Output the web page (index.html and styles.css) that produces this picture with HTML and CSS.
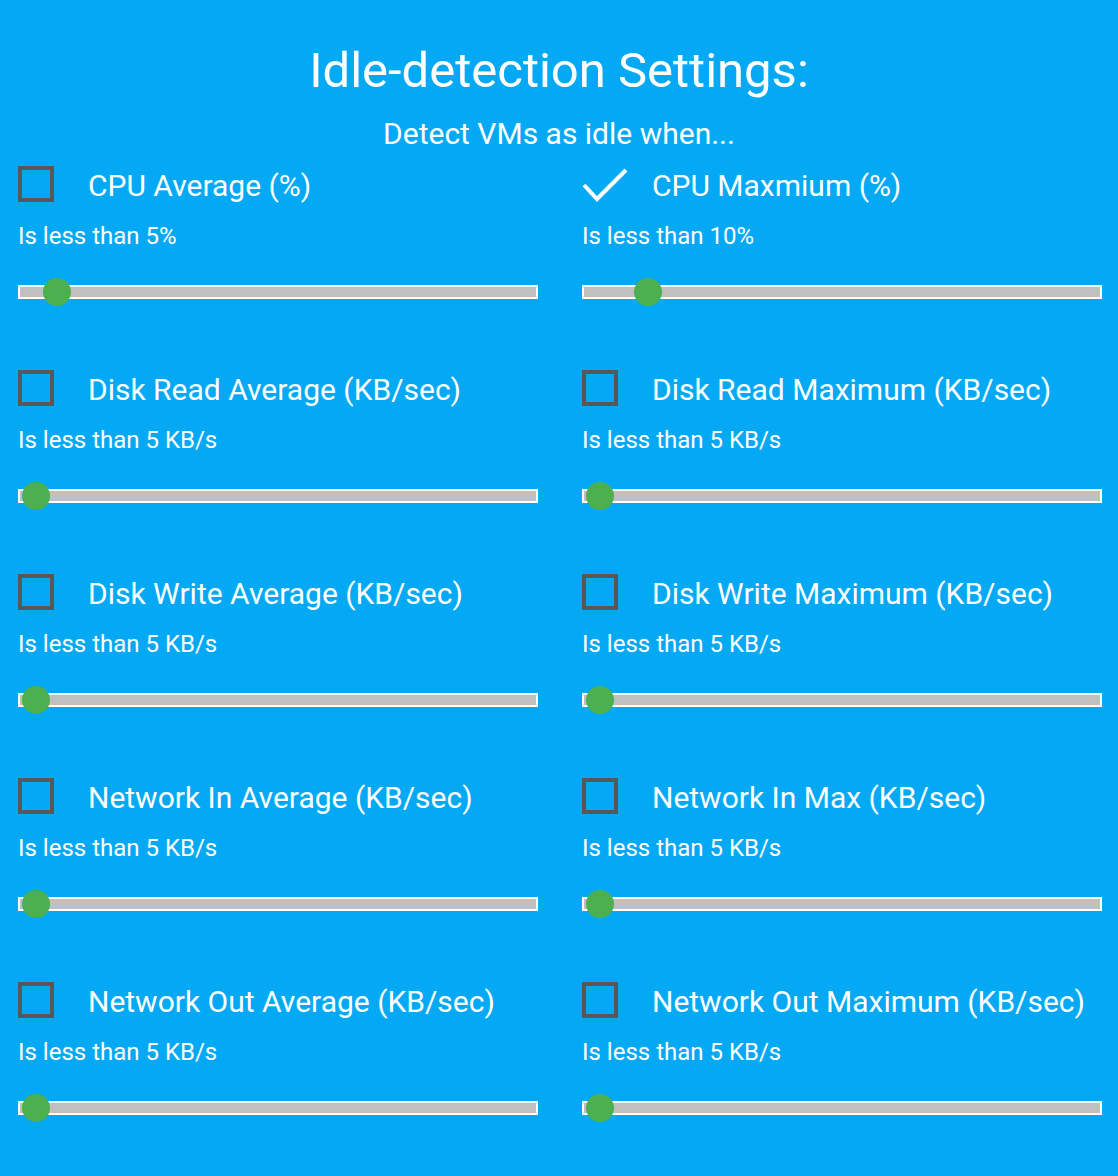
FILE: index.html
```html
<!DOCTYPE html>
<html lang="en">
<head>
    <meta charset="UTF-8">
    <title>Idle-detection Settings</title>
    <link rel="stylesheet" href="styles.css">
</head>
<body>
    <div class="header">
        <h1>Idle-detection Settings:</h1>
        <p>Detect VMs as idle when...</p>
    </div>

    <div class="settings">
        <div class="setting">
            <div class="setting-head">
                <span class="checkbox"></span>
                <span class="label">CPU Average (%)</span>
            </div>
            <div class="value">Is less than 5%</div>
            <div class="slider"><span class="thumb" style="left: 25px"></span></div>
        </div>

        <div class="setting">
            <div class="setting-head">
                <span class="checkbox checked">
                    <svg width="48" height="36" viewBox="0 0 48 36"><polyline points="2,19 15,33 44,4" fill="none" stroke="#fff" stroke-width="4"/></svg>
                </span>
                <span class="label">CPU Maxmium (%)</span>
            </div>
            <div class="value">Is less than 10%</div>
            <div class="slider"><span class="thumb" style="left: 52px"></span></div>
        </div>

        <div class="setting">
            <div class="setting-head">
                <span class="checkbox"></span>
                <span class="label">Disk Read Average (KB/sec)</span>
            </div>
            <div class="value">Is less than 5 KB/s</div>
            <div class="slider"><span class="thumb" style="left: 4px"></span></div>
        </div>

        <div class="setting">
            <div class="setting-head">
                <span class="checkbox"></span>
                <span class="label">Disk Read Maximum (KB/sec)</span>
            </div>
            <div class="value">Is less than 5 KB/s</div>
            <div class="slider"><span class="thumb" style="left: 4px"></span></div>
        </div>

        <div class="setting">
            <div class="setting-head">
                <span class="checkbox"></span>
                <span class="label">Disk Write Average (KB/sec)</span>
            </div>
            <div class="value">Is less than 5 KB/s</div>
            <div class="slider"><span class="thumb" style="left: 4px"></span></div>
        </div>

        <div class="setting">
            <div class="setting-head">
                <span class="checkbox"></span>
                <span class="label">Disk Write Maximum (KB/sec)</span>
            </div>
            <div class="value">Is less than 5 KB/s</div>
            <div class="slider"><span class="thumb" style="left: 4px"></span></div>
        </div>

        <div class="setting">
            <div class="setting-head">
                <span class="checkbox"></span>
                <span class="label">Network In Average (KB/sec)</span>
            </div>
            <div class="value">Is less than 5 KB/s</div>
            <div class="slider"><span class="thumb" style="left: 4px"></span></div>
        </div>

        <div class="setting">
            <div class="setting-head">
                <span class="checkbox"></span>
                <span class="label">Network In Max (KB/sec)</span>
            </div>
            <div class="value">Is less than 5 KB/s</div>
            <div class="slider"><span class="thumb" style="left: 4px"></span></div>
        </div>

        <div class="setting">
            <div class="setting-head">
                <span class="checkbox"></span>
                <span class="label">Network Out Average (KB/sec)</span>
            </div>
            <div class="value">Is less than 5 KB/s</div>
            <div class="slider"><span class="thumb" style="left: 4px"></span></div>
        </div>

        <div class="setting">
            <div class="setting-head">
                <span class="checkbox"></span>
                <span class="label">Network Out Maximum (KB/sec)</span>
            </div>
            <div class="value">Is less than 5 KB/s</div>
            <div class="slider"><span class="thumb" style="left: 4px"></span></div>
        </div>
    </div>
</body>
</html>
```

FILE: styles.css
```css
* {
    margin: 0;
    padding: 0;
    box-sizing: border-box;
}

body {
    font-family: Roboto, "Noto Sans", sans-serif;
    background-color: #03A9F4;
    color: #fff;
    min-height: 1176px;
}

.header {
    text-align: center;
    padding-top: 43px;
}

.header h1 {
    font-size: 49px;
    font-weight: 400;
    line-height: 56px;
}

.header p {
    font-size: 30px;
    line-height: 32px;
    margin-top: 19px;
}

.settings {
    display: grid;
    grid-template-columns: 520px 520px;
    column-gap: 44px;
    row-gap: 64px;
    margin: 16px 0 0 18px;
}

.setting-head {
    display: flex;
    align-items: center;
    height: 36px;
}

.checkbox {
    flex-shrink: 0;
    width: 36px;
    height: 36px;
    border: 4px solid #585858;
    margin-right: 34px;
}

.checkbox.checked {
    border: none;
}

.checkbox svg {
    display: block;
}

.label {
    font-size: 30px;
    line-height: 36px;
    margin-top: 4px;
    white-space: nowrap;
}

.value {
    font-size: 24px;
    line-height: 28px;
    margin-top: 20px;
}

.slider {
    position: relative;
    height: 28px;
    margin-top: 28px;
    display: flex;
    align-items: center;
}

.slider::before {
    content: "";
    display: block;
    width: 100%;
    height: 10px;
    background: #c0c0c0;
    border: 2px solid #fff;
}

.thumb {
    position: absolute;
    top: 0;
    width: 28px;
    height: 28px;
    border-radius: 50%;
    background: #4CAF50;
}
```
